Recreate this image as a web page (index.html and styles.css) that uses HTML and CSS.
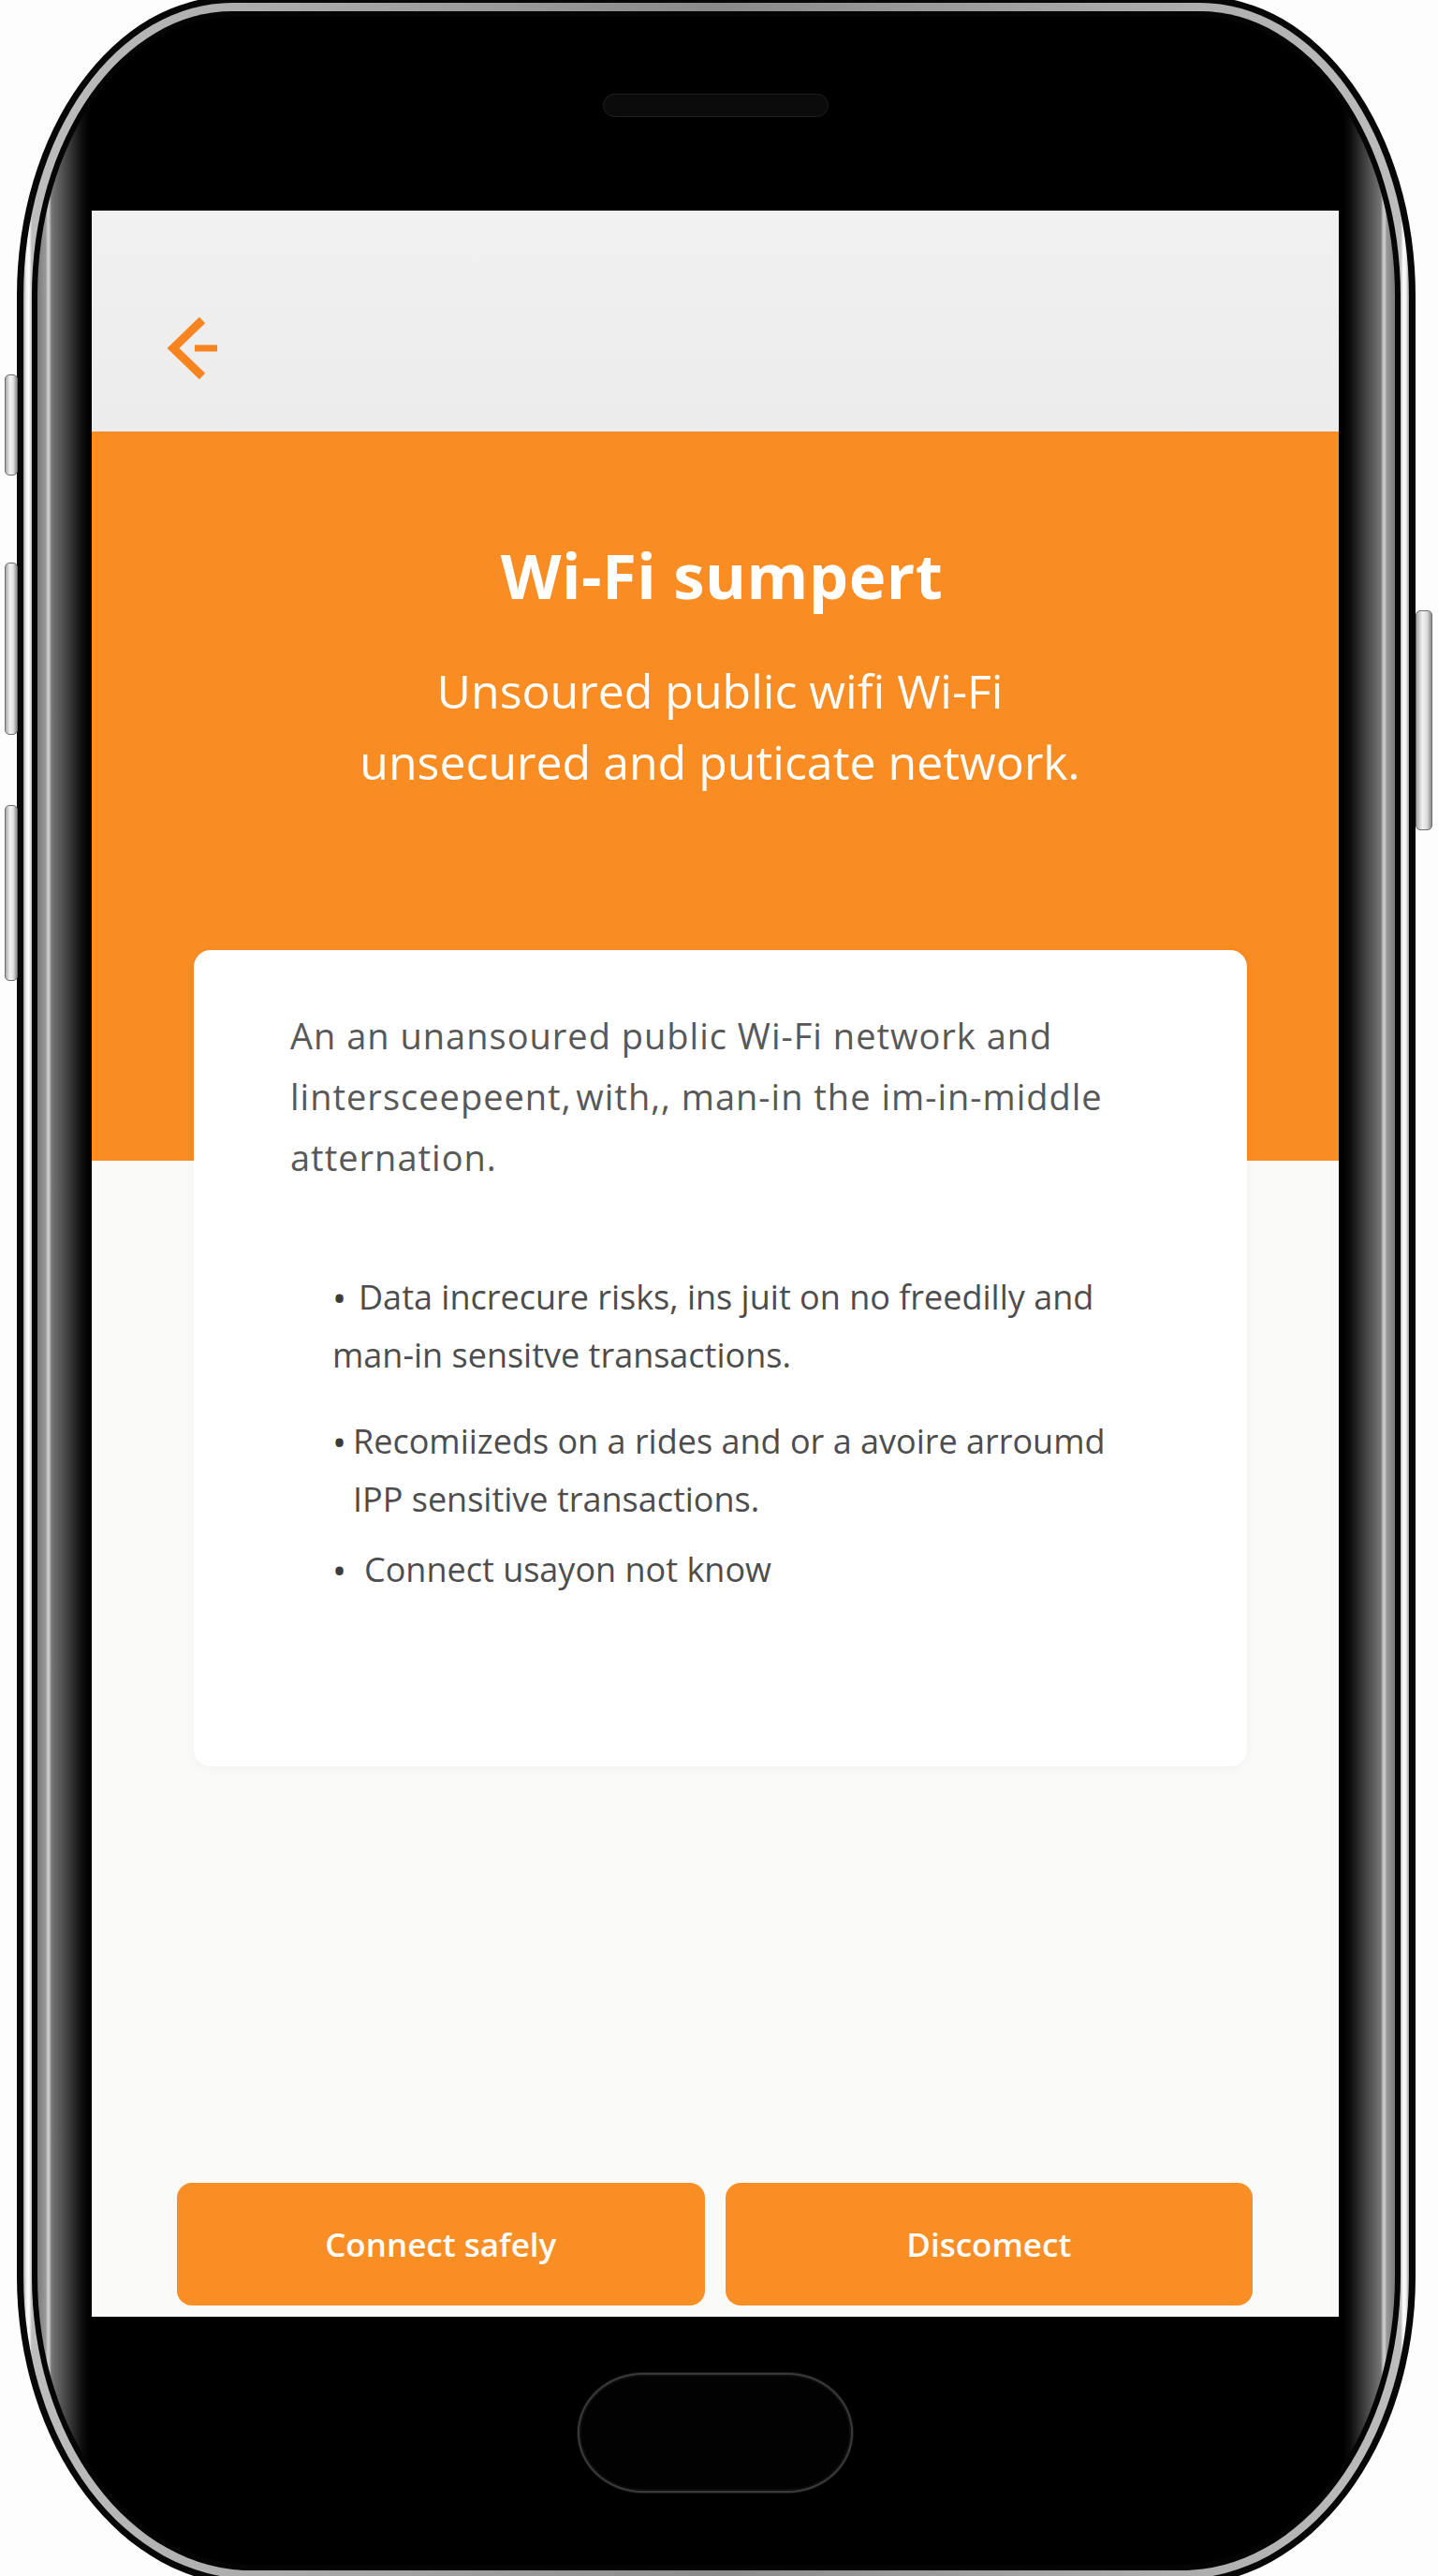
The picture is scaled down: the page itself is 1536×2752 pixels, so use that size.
FILE: index.html
```html
<!DOCTYPE html>
<html lang="en">
<head>
<meta charset="utf-8">
<title>Wi-Fi sumpert</title>
<link rel="stylesheet" href="styles.css">
</head>
<body>
<div class="stage">
  <div class="phone">
    <span class="side-btn side-l1"></span>
    <span class="side-btn side-l2"></span>
    <span class="side-btn side-l3"></span>
    <span class="side-btn side-r1"></span>
    <div class="chrome">
      <div class="rim">
        <div class="bezel">
          <div class="earpiece"></div>
          <div class="screen">
            <header class="topbar">
              <button class="back" aria-label="Back">
                <svg class="back-icon" width="60" height="72" viewBox="0 0 60 72">
                  <path d="M40 6 L9 36 L40 66" fill="none" stroke="#F7841E" stroke-width="9"/>
                  <path d="M32 36 H56" fill="none" stroke="#F7841E" stroke-width="7"/>
                </svg>
              </button>
            </header>
            <section class="hero">
              <h1 class="title">Wi-Fi sumpert</h1>
              <p class="subtitle">Unsoured public wifi Wi-Fi<br>unsecured and puticate network.</p>
            </section>
            <section class="card">
              <p class="lead">An an unansoured public Wi-Fi network and<br>linterscee­peent,&#8202;with,, man-in the im-in-middle<br>atternation.</p>
              <ul class="points">
                <li class="point point-wrap"><span class="dot">&bull;</span>Data increcure risks, ins juit on no freedilly and<br>man-in sensitve transactions.</li>
                <li class="point point-hang"><span class="dot">&bull;</span>Recomiizeds on a rides and or a avoire arroumd<br>IPP sensitive transactions.</li>
                <li class="point point-last"><span class="dot">&bull;</span>Connect usayon not know</li>
              </ul>
            </section>
            <div class="actions">
              <button class="btn">Connect safely</button>
              <button class="btn">Discomect</button>
            </div>
          </div>
          <div class="home"></div>
        </div>
      </div>
    </div>
  </div>
</div>
</body>
</html>
```

FILE: styles.css
```css
* { box-sizing: border-box; }

html, body {
  margin: 0;
  padding: 0;
  background: #fdfdfd;
}

body {
  font-family: "Open Sans", "Liberation Sans", sans-serif;
}

.stage {
  height: 2752px;
  overflow: hidden;
  padding-left: 18px;
}

.phone {
  position: relative;
  margin-top: -4px;
  width: 1494px;
  height: 2766px;
  padding: 7px;
  background: #070707;
  border-radius: 230px 230px 250px 250px / 320px 320px 330px 330px;
}

.chrome {
  height: 100%;
  padding: 9px;
  border-radius: 223px 223px 243px 243px / 313px 313px 323px 323px;
  background: linear-gradient(90deg, #9a9a9a 0, #eeeeee 3px, #ffffff 6px, #bdbdbd 9px, #8a8a8a 50%, #bdbdbd calc(100% - 9px), #ffffff calc(100% - 6px), #eeeeee calc(100% - 3px), #9a9a9a 100%);
}

.rim {
  height: 100%;
  padding: 6px;
  background: #050505;
  border-radius: 214px 214px 234px 234px / 304px 304px 314px 314px;
}

.bezel {
  height: 100%;
  display: flex;
  flex-direction: column;
  align-items: center;
  padding: 82px 60px 0 58px;
  border-radius: 208px 208px 228px 228px / 298px 298px 308px 308px;
  background:
    linear-gradient(90deg,
      #7a7a7a 0, #9a9a9a 9px, #d0d0d0 11px, #bdbdbd 13px, #767676 15px,
      #3a3a3a 34px, #0c0c0c 48px, #000 56px,
      #000 calc(100% - 56px), #0c0c0c calc(100% - 48px), #3a3a3a calc(100% - 34px),
      #767676 calc(100% - 15px), #bdbdbd calc(100% - 13px), #d0d0d0 calc(100% - 11px),
      #9a9a9a calc(100% - 9px), #7a7a7a 100%);
}

.earpiece {
  width: 241px;
  height: 25px;
  margin-bottom: 100px;
  border-radius: 13px;
  background: #0b0b0b;
  border: 1px solid #1f1f1f;
}

.screen {
  align-self: stretch;
  height: 2250px;
  display: flex;
  flex-direction: column;
  background: #fafaf8;
  overflow: hidden;
}

.home {
  width: 294px;
  height: 128px;
  margin-top: 60px;
  border-radius: 70px / 64px;
  border: 2px solid #3a3a3a;
  box-shadow: inset 0 0 0 2px #0d0d0d, 0 0 0 1px #151515;
  background: #020202;
}

.side-btn {
  position: absolute;
  width: 14px;
  border: 1px solid #6d6d6d;
  border-radius: 5px;
  background: linear-gradient(90deg, #a9a9a9, #f2f2f2 40%, #dcdcdc 70%, #8c8c8c);
}

.side-l1 { left: -13px; top: 404px; height: 108px; }
.side-l2 { left: -13px; top: 605px; height: 184px; }
.side-l3 { left: -13px; top: 864px; height: 188px; }
.side-r1 { right: -18px; top: 656px; height: 235px; width: 18px; }

/* ---------- screen content ---------- */

.topbar {
  height: 236px;
  padding: 111px 0 0 78px;
  background: linear-gradient(180deg, #f1f1f1, #ececec);
  flex: none;
}

.back {
  display: block;
  padding: 0;
  border: 0;
  background: none;
}

.back-icon { display: block; }

.hero {
  height: 779px;
  flex: none;
  padding: 120px 0 0 10px;
  background: #f98c22;
  color: #ffffff;
  text-align: center;
}

.title {
  margin: 0;
  font-size: 67px;
  line-height: 66px;
  font-weight: 700;
  letter-spacing: 0.5px;
  padding-left: 4px;
}

.subtitle {
  margin: 53px 0 0;
  font-size: 50px;
  line-height: 76px;
  font-weight: 500;
}

.card {
  flex: none;
  margin: -225px 0 0 109px;
  width: 1125px;
  height: 872px;
  padding: 59px 0 0 103px;
  background: #ffffff;
  border-radius: 18px;
  box-shadow: 0 2px 12px rgba(0, 0, 0, 0.04);
  color: #585858;
}

.lead {
  margin: 0;
  font-size: 38px;
  line-height: 65px;
  letter-spacing: 1px;
}

.points {
  list-style: none;
  margin: 86px 0 0 45px;
  padding: 0;
  font-size: 36px;
  line-height: 62px;
  color: #4d4d4d;
}

.dot {
  display: inline-block;
  font-size: 40px;
  line-height: 0;
  vertical-align: -3px;
  color: #3c3c3c;
}

.point-wrap .dot { width: 28px; }

.point-hang {
  margin-top: 30px;
  padding-left: 22px;
  text-indent: -22px;
}
.point-hang .dot { width: 22px; text-indent: 0; }

.point-last { margin-top: 13px; }
.point-last .dot { width: 34px; }

.actions {
  margin-top: auto;
  display: grid;
  grid-template-columns: 1fr 1fr;
  gap: 22px;
  padding: 0 92px 12px 91px;
}

.btn {
  height: 131px;
  border: 0;
  border-radius: 16px;
  background: #f98e25;
  color: #ffffff;
  font-family: "Open Sans", "Liberation Sans", sans-serif;
  font-size: 35px;
  font-weight: 600;
}
```
